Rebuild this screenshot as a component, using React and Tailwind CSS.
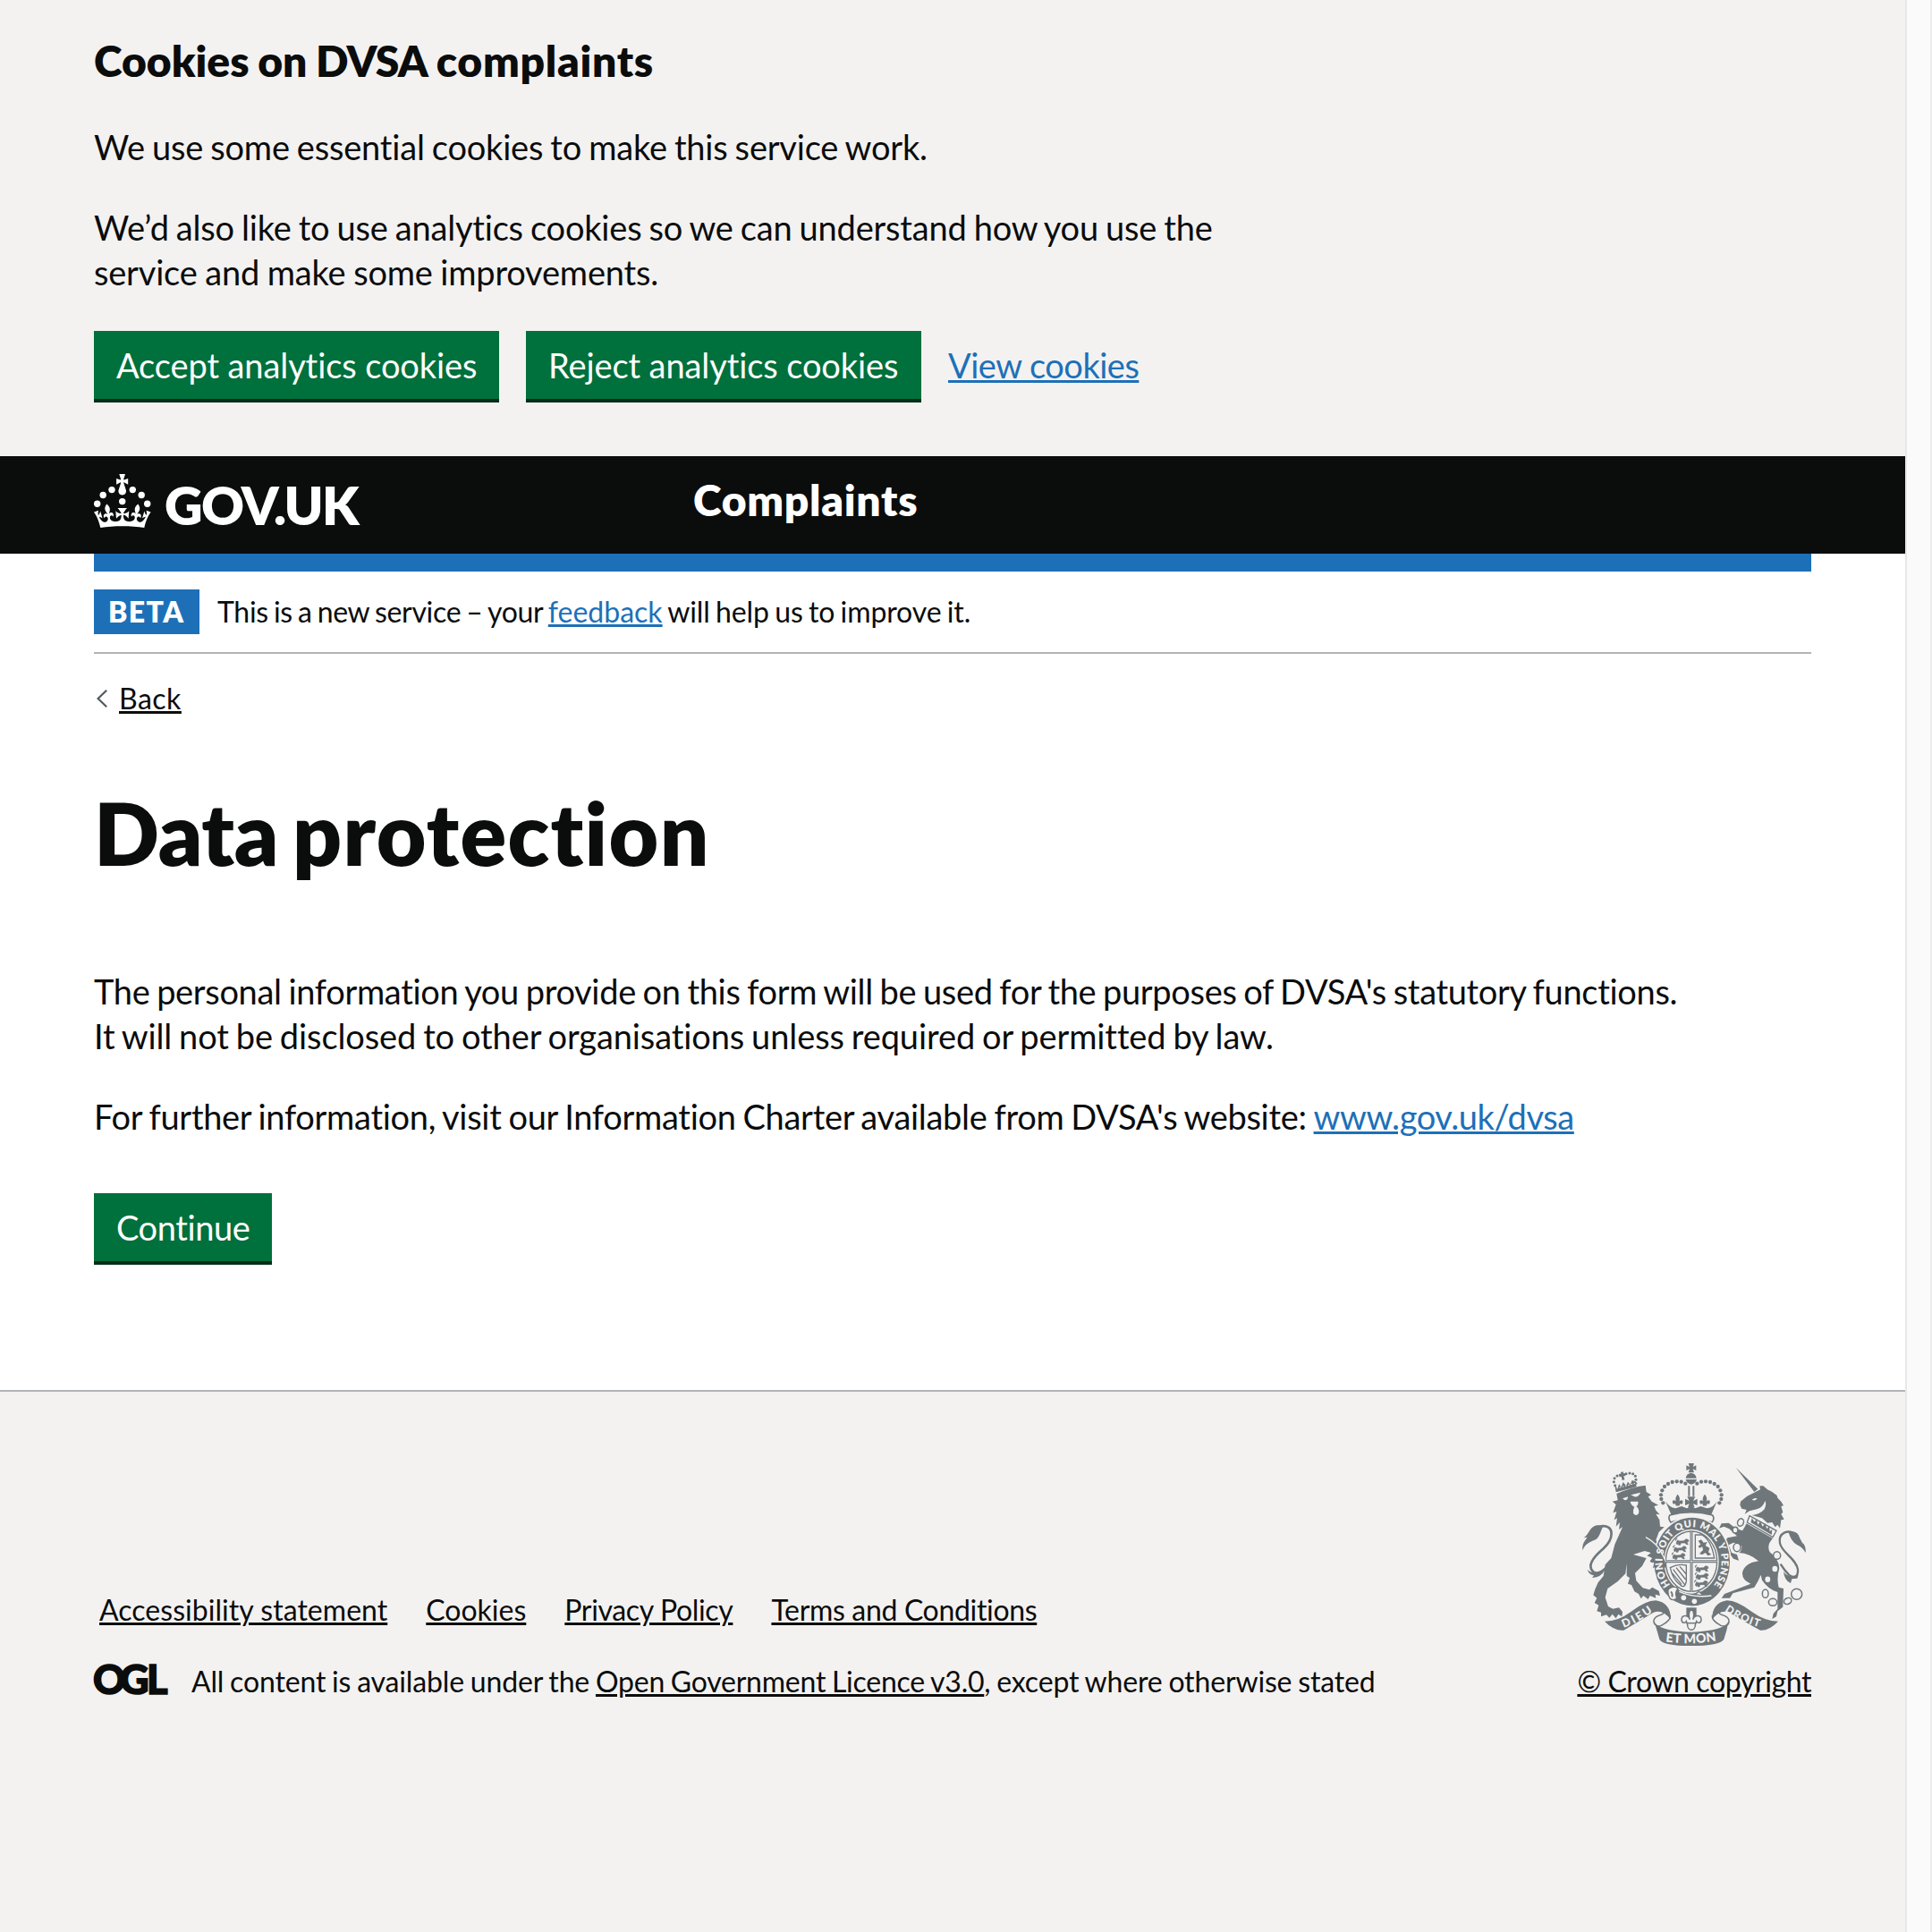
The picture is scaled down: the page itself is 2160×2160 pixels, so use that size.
import React from "react";

function Crown() {
  return (
    <svg className="h-[60px] w-[64px] shrink-0" viewBox="0 0 64 60" fill="#fff" aria-hidden="true">
      <circle cx="20" cy="17.6" r="3.7" />
      <circle cx="10.2" cy="23.5" r="3.7" />
      <circle cx="3.7" cy="33.2" r="3.7" />
      <circle cx="31.7" cy="30.6" r="3.7" />
      <circle cx="43.3" cy="17.6" r="3.7" />
      <circle cx="53.2" cy="23.5" r="3.7" />
      <circle cx="59.7" cy="33.2" r="3.7" />
      <path d="M33.1,9.8c.2-.1.3-.3.5-.5l4.6,2.4v-6.8l-4.6,1.5c-.1-.2-.3-.3-.5-.5l1.9-5.9h-6.7l1.9,5.9c-.2.1-.3.3-.5.5l-4.6-1.5v6.8l4.6-2.4c.1.2.3.3.5.5l-2.6,8c-.9,2.8,1.2,5.7,4.1,5.7h0c3,0,5.1-2.9,4.1-5.7l-2.6-8ZM37,37.9s-3.4,3.8-4.1,6.1c2.2,0,4.2-.5,6.4-2.8l-.7,8.5c-2-2.8-4.4-4.1-5.7-3.8.1,3.1.5,6.7,5.8,7.2,3.7.3,6.7-1.5,7-3.8.4-2.6-2-4.3-3.7-1.6-1.4-4.5,2.4-6.1,4.9-3.2-1.9-4.5-1.8-7.7,2.4-10.9,3,4,2.6,7.3-1.2,11.1,2.4-1.3,6.2,0,4,4.6-1.2-2.8-3.7-2.2-4.2.2-.3,1.7.7,3.7,3,4.2,1.9.3,4.7-.9,7-5.9-1.3,0-2.4.7-3.9,1.7l2.4-8c.6,2.3,1.4,3.7,2.2,4.5.6-1.6.5-2.8,0-5.3l5,1.8c-2.6,3.6-5.2,8.7-7.3,17.5-7.4-1.1-15.7-1.7-24.5-1.7h0c-8.8,0-17.1.6-24.5,1.7-2.1-8.9-4.7-13.9-7.3-17.5l5-1.8c-.5,2.5-.6,3.7,0,5.3.8-.8,1.6-2.3,2.2-4.5l2.4,8c-1.5-1-2.6-1.7-3.9-1.7,2.3,5,5.2,6.2,7,5.9,2.3-.4,3.3-2.4,3-4.2-.5-2.4-3-3.1-4.2-.2-2.2-4.6,1.6-6,4-4.6-3.7-3.7-4.2-7.1-1.2-11.1,4.2,3.2,4.3,6.4,2.4,10.9,2.5-2.8,6.3-1.3,4.9,3.2-1.8-2.7-4.1-1-3.7,1.6.3,2.3,3.3,4.1,7,3.8,5.4-.5,5.7-4.2,5.8-7.2-1.3-.2-3.7,1-5.7,3.8l-.7-8.5c2.2,2.3,4.2,2.7,6.4,2.8-.7-2.3-4.1-6.1-4.1-6.1h10.6,0Z" />
    </svg>
  );
}

const INK = "#6f777b";
const PAPER = "#f3f2f1";

// Left half of the royal crown's pearls; mirrored for the right half.
const PEARLS = [
  [358, 211], [352, 198], [351, 184], [355, 169], [363, 156],
  [375, 147], [389, 141], [404, 139], [419, 140], [433, 146],
];

function Passant({ x, y }) {
  return (
    <path
      transform={`translate(${x} ${y})`}
      d="M2 16 L6 6 L14 9 L28 8 L34 2 L42 4 L44 10 L38 12 L42 20 L36 20 L32 15 L18 15 L16 22 L10 22 L10 15 L6 21 Z M0 8 Q-2 0 6 -1"
      stroke={INK}
      strokeWidth="2"
      fill={INK}
    />
  );
}

function Fleur({ x, y, s = 1 }) {
  return (
    <path
      transform={`translate(${x} ${y}) scale(${s})`}
      d="M0 -24 C10 -12 8 -4 4 4 C8 -6 20 -6 18 4 C18 12 10 12 9 8 L6 16 L-6 16 L-9 8 C-10 12 -18 12 -18 4 C-20 -6 -8 -6 -4 4 C-8 -4 -10 -12 0 -24 Z"
    />
  );
}

function Crest() {
  return (
    <svg className="h-[204px] w-[250px]" viewBox="87 78 750 612" fill={INK} aria-hidden="true">
      <defs>
        <path id="garter" d="M382 486 A99 116 0 1 1 528 486" />
        <path id="dieu" d="M226 630 Q275 612 328 573" />
        <path id="mon" d="M366 676 Q452 688 542 673" />
        <path id="droit" d="M564 573 Q620 612 690 630" />
      </defs>

      {/* royal crown */}
      <path d="M443 78 h19 l-4 12 l11 -5 v17 l-11 -5 l4 12 h-19 l4 -12 l-11 5 v-17 l11 5 z" />
      <path d="M452 110 q16 2 18 18 h-36 q2 -16 18 -18z M434 132 h37 q-2 12 -18 17 q-17 -5 -19 -17z" />
      <path d="M442 154 h6 v34 h-6z M457 154 h6 v34 h-6z" />
      {PEARLS.map(([x, y]) => (
        <g key={x}>
          <circle cx={x} cy={y} r="6.4" />
          <circle cx={905 - x} cy={y} r="6.4" />
        </g>
      ))}
      <path d="M366 205 L386 252 Q452 228 519 252 L539 205 Q528 226 505 229 L484 222 L466 229 L452 222 L438 229 L420 222 L400 229 Q378 226 366 205Z" />
      <path d="M439 190 h27 l-7 14 l14 -7 v22 l-14 -5 l5 12 h-23 l5 -12 l-14 5 v-22 l14 7z" />
      <Fleur x={407} y={205} s={0.95} />
      <Fleur x={498} y={205} s={0.95} />
      <path d="M380 252 Q452 232 524 252 Q532 264 522 276 Q452 252 384 276 Q374 264 380 252Z" fill={PAPER} stroke={INK} strokeWidth="5" />

      {/* lion supporter */}
      <path d="M150 289 C196 284 194 330 158 364 C118 398 104 424 124 442 C142 454 160 436 182 414" fill="none" stroke={INK} strokeWidth="8" />
      <path d="M88 370 C86 346 96 338 104 326 L92 328 C112 314 110 292 136 286 L162 285 C148 296 150 322 132 334 C114 342 98 346 88 370Z" />
      <path d="M104 434 Q116 448 146 446 L160 440 Q152 458 120 462 L126 454 Q110 452 104 434Z" />
      <path d="M202 180 Q250 158 299 152 L302 174 L318 184 L308 190 L320 206 L342 218 L328 222 L334 236 L347 250 L334 248 L346 268 L348 290 L362 292 L344 308 L334 336 L356 366 L362 398 L364 432 L350 424 L346 436 L338 422 L326 430 L328 414 L314 408 L322 396 L304 388 L318 378 L296 372 L258 384 L302 396 L288 422 L264 446 L268 472 L290 496 L312 502 L322 494 L344 506 L348 522 L332 518 L334 530 L314 522 L308 534 L292 522 L284 532 L276 516 L262 508 L252 486 L240 482 L246 462 L236 456 L236 414 L232 448 L206 474 L172 498 L164 528 L174 558 L190 566 L210 562 L222 576 L220 592 L208 584 L200 598 L188 584 L178 596 L168 586 L150 592 L150 578 L136 574 L142 554 L128 546 L136 530 L124 520 L130 500 L140 478 L158 456 L164 418 L184 396 L196 350 L222 292 L210 300 L213 276 L200 290 L204 262 L194 268 L202 240 L190 244 L200 216 L188 206 L206 202Z" />
      <path d="M250 184 L282 176 Q276 192 262 190Z M222 196 L240 190 Q240 202 230 202Z M248 206 L274 206 Q276 218 268 222 Q280 232 276 246 Q268 258 258 246 Q256 234 262 224 Q250 218 248 206Z" fill={PAPER} />
      {[[197, 152], [193, 140], [195, 128], [204, 120], [214, 117], [234, 113], [246, 111], [257, 113], [265, 121], [267, 133], [266, 145]].map(([x, y]) => (
        <circle key={`${x}-${y}`} cx={x} cy={y} r="4.6" />
      ))}
      <path d="M216 108 l8 -2 l1 6 l6 0 l1 8 l-6 1 l3 12 l-8 2 l-3 -12 l-6 1 l-1 -8 l6 -1z" />
      <path d="M196 153 l10 8 l4 -13 l8 9 l6 -16 l10 12 l6 -13 l8 9 l6 -14 l12 4 l3 18 l-69 18z" />
      <path d="M202 162 l62 -17" stroke={PAPER} strokeWidth="3" strokeDasharray="5 5" />

      {/* unicorn supporter */}
      <path d="M602 92 L676 164 L664 174Z" />
      <path d="M664 176 L684 166 L682 154 L694 154 L708 166 L724 174 L740 186 L742 194 L754 206 L762 220 L754 222 L760 242 L754 248 L764 266 L754 268 L750 296 L742 284 L734 292 L724 276 L708 278 L690 262 L656 252 Q682 250 698 232 Q706 214 700 204 Q694 226 672 232 L648 238 L632 248 L638 234 L622 230 L616 218 L618 206 L640 188Z" />
      <path d="M656 200 Q664 192 674 196 Q668 206 656 200Z" fill={PAPER} />
      <path d="M648 254 L738 304 L726 326 L640 276Z" fill={PAPER} stroke={INK} strokeWidth="4" />
      <path d="M652 276 l4 -14 l8 12 l8 -8 l4 18 l8 -12 l8 18 l8 -10 l6 18 l8 -10 l2 18 l8 -6 l-2 18z" />
      <path d="M638 280 L726 330 Q704 352 716 376 Q746 398 748 430 Q738 462 746 494 L762 498 L760 560 L742 574 L738 592 L724 600 L728 582 L742 566 L742 510 Q710 500 690 470 L686 452 Q676 476 664 494 L592 514 L582 530 L554 530 L564 516 L580 510 L652 482 Q622 470 624 444 Q632 412 678 406 Q650 380 612 378 Q622 372 622 356 Q608 344 594 344 L578 352 L588 378 L606 384 L612 404 L594 398 L576 374 L562 346 L574 328 L606 322 L580 298 L562 290 L546 296 L554 280 L578 278 L602 296 L624 304 Q630 296 638 280Z" />
      <path d="M806 318 C776 296 744 312 750 346 C756 378 804 396 810 434 C812 458 796 466 780 452 Q764 436 752 416" fill="none" stroke={INK} strokeWidth="7" />
      <path d="M778 306 Q812 304 816 328 L828 350 L826 344 Q838 356 836 378 Q826 360 808 352 Q786 340 778 306Z" />
      <path d="M762 440 Q774 464 812 452 L808 464 L790 466 L786 480 Q764 470 762 440Z" />
      <g fill={PAPER} stroke={INK} strokeWidth="4.5">
        <ellipse cx="618" cy="276" rx="10" ry="13" transform="rotate(20 618 276)" />
        <ellipse cx="600" cy="302" rx="9" ry="10" />
        <ellipse cx="606" cy="360" rx="12" ry="14" />
        <ellipse cx="740" cy="387" rx="12" ry="13" />
        <ellipse cx="733" cy="432" rx="11" ry="12" />
        <ellipse cx="709" cy="467" rx="11" ry="12" />
        <ellipse cx="701" cy="515" rx="10" ry="14" />
        <ellipse cx="726" cy="544" rx="14" ry="12" />
        <ellipse cx="776" cy="540" rx="13" ry="10" transform="rotate(-25 776 540)" />
        <circle cx="806" cy="517" r="18" />
      </g>

      {/* garter and shield */}
      <ellipse cx="455" cy="408" rx="132" ry="153" fill={PAPER} />
      <ellipse cx="455" cy="408" rx="127" ry="148" />
      <ellipse cx="453" cy="407" rx="92" ry="108" fill={PAPER} />
      <ellipse cx="453" cy="407" rx="86" ry="101" fill={PAPER} stroke={INK} strokeWidth="4" />
      <path d="M453 304 V510 M366 407 H540" stroke={INK} strokeWidth="9" />
      <path d="M453 304 V510 M366 407 H540" stroke={PAPER} strokeWidth="2" />
      <Passant x={400} y={330} />
      <Passant x={392} y={354} />
      <Passant x={388} y={378} />
      <Passant x={466} y={420} />
      <Passant x={466} y={445} />
      <Passant x={464} y={470} />
      <path d="M466 318 H488 Q520 336 530 396 H466Z" fill="none" stroke={INK} strokeWidth="4" />
      <path d="M476 338 l10 -4 l8 10 l12 -2 l-6 12 l14 8 l-4 14 l10 8 l-12 4 l-8 -10 l-10 6 l-10 -2 l6 -8 l6 -4 l-2 -12 l-10 4 l-4 -6 l8 -6z" />
      <path d="M382 428 Q408 414 436 420 V474 Q430 500 416 486 Q390 468 382 428Z M392 434 L430 484 M402 428 L434 468 M414 424 L436 450 M388 446 L420 484" fill="none" stroke={INK} strokeWidth="4" />
      {/* lion's forepaw over the garter's edge */}
      <path d="M300 326 L346 358 L362 392 L368 430 L352 420 L346 436 L336 422 L324 430 L328 412 L314 406 L322 396Z" />
      <path d="M300 326 Q336 346 352 376 L366 404" fill="none" stroke={PAPER} strokeWidth="4" />
      <text fill={PAPER} className="font-[Lato] text-[33px] font-extrabold">
        <textPath href="#garter" textLength="506">HONI SOIT QUI MAL Y PENSE</textPath>
      </text>
      <path d="M376 500 Q396 486 408 498 Q396 512 404 530 Q392 542 380 530 Q372 514 376 500Z M478 508 l-14 10 l30 4z" fill={PAPER} stroke={INK} strokeWidth="4" />
      <path d="M384 508 q8 8 4 18" fill="none" stroke={INK} strokeWidth="5" />
      <path d="M412 508 Q460 532 532 520 Q500 556 455 556 Q420 552 404 540Z" />
      <path d="M412 508 Q460 530 520 522" fill="none" stroke={PAPER} strokeWidth="4" />
      <circle cx="427" cy="529" r="8.5" fill={PAPER} />
      <circle cx="463" cy="541" r="8.5" fill={PAPER} />

      {/* plant badge and motto ribbon */}
      <path d="M436 562 H470 V596 H436Z" />
      <g fill={PAPER} stroke={INK} strokeWidth="4.5">
        <path d="M453 566 C466 580 462 592 458 602 C464 584 486 586 486 602 C486 614 474 616 470 608 L466 620 C466 642 440 642 440 620 L436 608 C432 616 420 614 420 602 C420 586 442 584 448 602 C444 592 440 580 453 566Z" />
        <path d="M438 614 H468" />
      </g>
      <path d="M382 588 Q384 606 352 622 Q340 628 330 618 Q318 596 352 586 Q366 580 358 566" fill={PAPER} stroke={INK} strokeWidth="4.5" />
      <path d="M162 608 Q208 608 250 576 Q300 538 334 538 Q384 546 384 602 Q356 566 326 578 Q280 606 226 638 Q192 640 162 608Z" />
      <path d="M523 588 Q520 606 552 622 Q566 628 576 618 Q588 596 554 586 Q540 580 548 566" fill={PAPER} stroke={INK} strokeWidth="4.5" />
      <path d="M744 608 Q700 608 656 576 Q606 538 572 538 Q522 546 522 602 Q550 566 580 578 Q626 606 684 638 Q714 640 744 608Z" />
      <path d="M328 606 Q336 640 452 644 Q568 640 578 606 Q572 640 562 668 Q548 690 452 690 Q356 690 346 668Z" />
      <g fill={PAPER} className="font-[Lato] font-black">
        <text className="text-[38px]"><textPath href="#dieu" textLength="112">DIEU</textPath></text>
        <text className="text-[43px]"><textPath href="#mon" textLength="172">ET MON</textPath></text>
        <text className="text-[36px]"><textPath href="#droit" textLength="128">DROIT</textPath></text>
      </g>
    </svg>
  );
}

const BTN = "flex h-[80px] items-center border-b-4 border-[#002d18] bg-[#00703c] px-[25px] leading-[38px] text-white whitespace-nowrap";
const LINK = "underline decoration-[3px] underline-offset-[2px]";

export default function App() {
  return (
    <div className="flex h-[2160px] w-[2160px] overflow-hidden bg-[#fafafa] font-[Lato,sans-serif] text-[38px] leading-[50px] text-[#0b0c0c] [font-variant-ligatures:none]">
      <div className="flex w-[2130px] flex-col bg-white">
        <section className="h-[510px] bg-[#f3f2f1] px-[105px] pt-[38px]">
          <h2 className="mb-[41px] text-[48px] leading-[60px] font-extrabold [word-spacing:-1.5px]">
            Cookies on <span className="tracking-[-0.8px]">DVSA</span> <span className="tracking-[0.7px]">complaints</span>
          </h2>
          <p className="mb-[40px] tracking-[-0.2px] [word-spacing:-1.4px]">We use some essential cookies to make this service work.</p>
          <p className="mb-[41px] tracking-[-0.2px] [word-spacing:-1.4px]">
            We’d also like to use analytics cookies so we can understand how you use the<br />
            <span className="[word-spacing:-0.8px]">service and make some improvements.</span>
          </p>
          <div className="flex items-start gap-[30px]">
            <button className={`w-[453px] tracking-[-0.1px] ${BTN}`}>Accept analytics cookies</button>
            <button className={`w-[442px] tracking-[-0.1px] ${BTN}`}>Reject analytics cookies</button>
            <a className={`mt-[13px] tracking-[-0.5px] text-[#1d70b8] ${LINK}`}>View cookies</a>
          </div>
        </section>

        <header className="flex h-[109px] items-start bg-[#0b0c0c] px-[105px] text-white">
          <div className="mt-[20px] flex w-[670px] items-start gap-[15px]">
            <Crown />
            <span className="mt-[5px] text-[59px] leading-[60px] font-extrabold tracking-[-1.7px]">GOV.UK</span>
          </div>
          <span className="mt-[19px] text-[48px] leading-[60px] font-extrabold tracking-[0.7px]">Complaints</span>
        </header>

        <div className="mx-[105px] h-[20px] bg-[#1d70b8]" />

        <main className="mx-[105px] flex h-[915px] flex-col">
          <div className="flex h-[92px] items-start border-b-2 border-[#b1b4b6] pt-[20px] text-[32px] leading-[40px]">
            <strong className="mr-[20px] h-[50px] w-[118px] bg-[#1d70b8] pt-[5px] pl-[16px] font-extrabold tracking-[1.4px] text-white">BETA</strong>
            <p className="mt-[5px] tracking-[-0.3px] [word-spacing:-1.8px]">
              This is a new service – your <a className={`tracking-normal text-[#1d70b8] ${LINK}`}>feedback</a><span className="tracking-[-0.1px]"> will help us to improve it.</span>
            </p>
          </div>
          <a className="mt-[30px] flex items-center text-[32px] leading-[40px] tracking-[0.5px]">
            <svg className="mr-[13px] ml-[3px] h-[20px] w-[12px]" viewBox="0 0 12 20" fill="none" stroke="#505a5f" strokeWidth="2.2">
              <path d="M11.2 .8 1.6 10l9.6 9.2" />
            </svg>
            <span className={LINK}>Back</span>
          </a>
          <h1 className="mt-[80px] text-[96px] leading-[100px] font-extrabold tracking-[-0.3px] [word-spacing:-6px]">
            Data <span className="tracking-[1.3px]">protection</span>
          </h1>
          <p className="mt-[102px] tracking-[-0.32px] whitespace-nowrap [word-spacing:-1.7px]">
            The personal information you provide on this form will be used for the purposes of DVSA's statutory functions.<br />
            <span className="tracking-[-0.1px]">It will not be disclosed to other organisations unless required or permitted by law.</span>
          </p>
          <p className="mt-[40px] tracking-[-0.3px] whitespace-nowrap [word-spacing:-1.5px]">
            For further information, visit our Information Charter available from DVSA's website: <a className={`tracking-[-0.4px] text-[#1d70b8] ${LINK}`}>www.gov.uk/dvsa</a>
          </p>
          <button className={`mt-[61px] w-[199px] self-start tracking-[-0.4px] ${BTN}`}>Continue</button>
        </main>

        <footer className="flex grow items-start justify-between border-t-2 border-[#b1b4b6] bg-[#f3f2f1] px-[105px] pt-[80px] text-[32px] leading-[40px]">
          <div className="pt-[144px]">
            <nav className="ml-[6px] flex gap-[43px]">
              <a className={`tracking-[0.04px] ${LINK}`}>Accessibility statement</a>
              <a className={LINK}>Cookies</a>
              <a className={`tracking-[-0.35px] ${LINK}`}>Privacy Policy</a>
              <a className={`tracking-[-0.33px] ${LINK}`}>Terms and Conditions</a>
            </nav>
            <div className="mt-[40px] flex">
              <svg className="mt-[1px] mr-[27px] h-[34px] w-[82px] overflow-visible" viewBox="0 0 82 34">
                <text x="-1 29 59" y="33" fill="#0b0c0c" stroke="#0b0c0c" strokeWidth="1.6" className="font-[Lato] text-[45px] font-black">OGL</text>
              </svg>
              <p className="tracking-[-0.15px] [word-spacing:-1.2px]">
                All content is available under the <a className={`tracking-[-0.23px] ${LINK}`}>Open Government Licence v3.0</a>, except where otherwise stated
              </p>
            </div>
          </div>
          <div className="flex flex-col items-end">
            <div className="mr-[6px] h-[204px] w-[250px]"><Crest /></div>
            <a className={`mt-[20px] tracking-[-0.4px] ${LINK}`}>© Crown copyright</a>
          </div>
        </footer>
      </div>
      <div className="flex grow justify-between">
        <div className="w-[2px] bg-[#e8e8e8]" />
        <div className="w-[2px] bg-[#ededed]" />
      </div>
    </div>
  );
}
